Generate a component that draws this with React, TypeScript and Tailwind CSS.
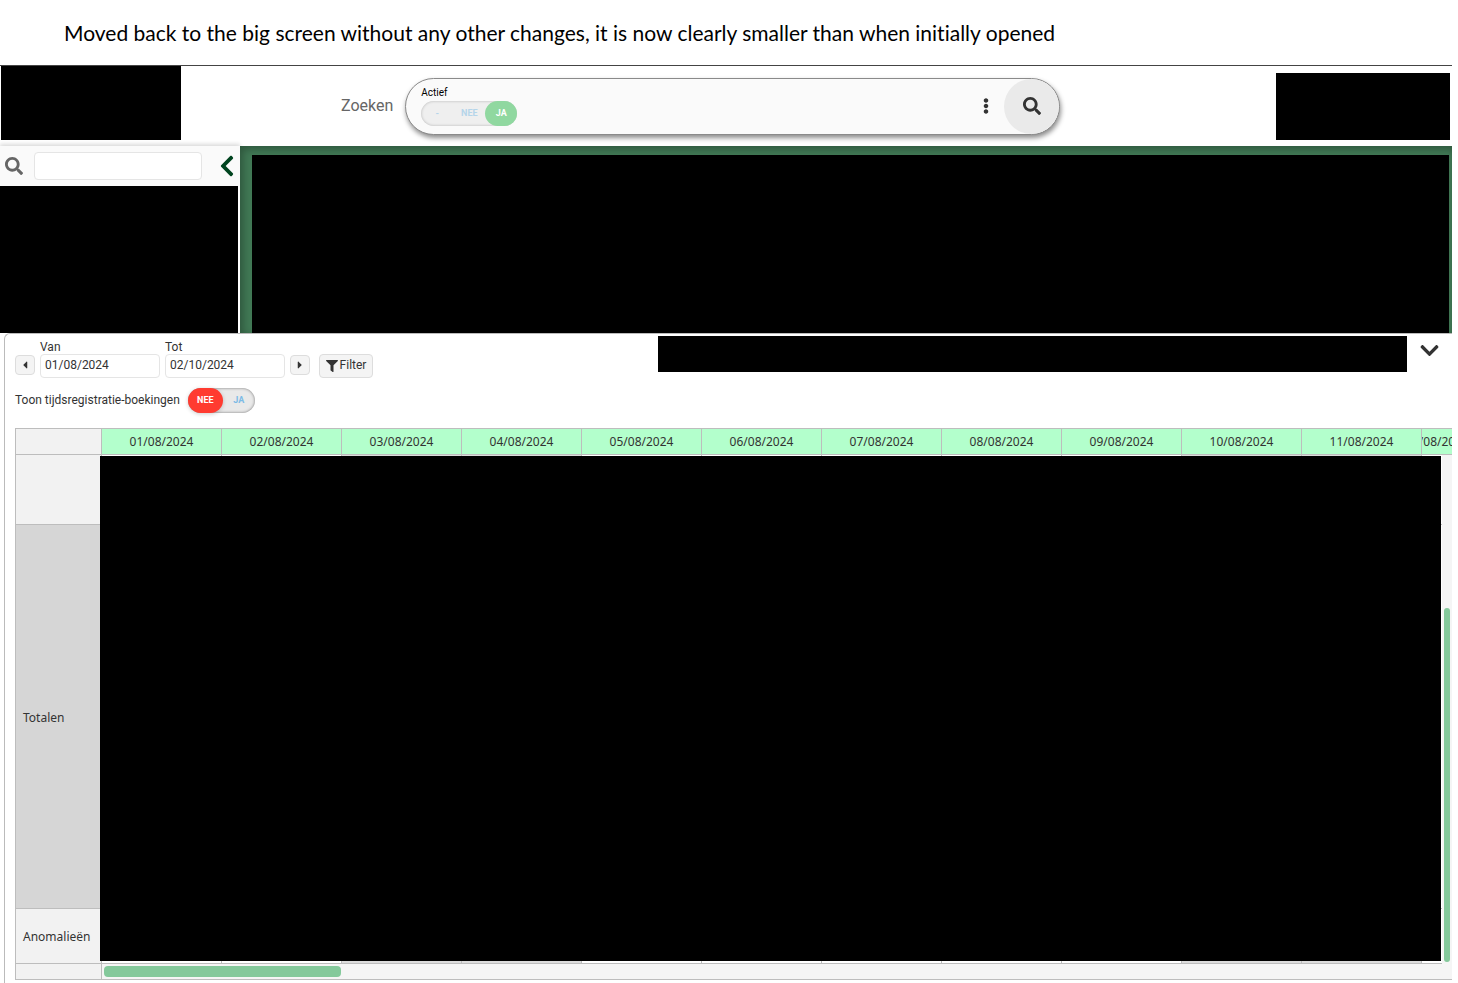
import { FaChevronDown, FaChevronLeft, FaEllipsisV, FaCaretLeft, FaCaretRight, FaFilter, FaSearch } from "react-icons/fa";

const days = [
  "01/08/2024", "02/08/2024", "03/08/2024", "04/08/2024", "05/08/2024", "06/08/2024",
  "07/08/2024", "08/08/2024", "09/08/2024", "10/08/2024", "11/08/2024", "12/08/2024",
];
const weekend = new Set(["03/08/2024", "04/08/2024", "10/08/2024", "11/08/2024"]);

const rows = [
  { label: "", height: "h-[70px]", shade: "bg-[#f2f2f2]" },
  { label: "Totalen", height: "h-[384px]", shade: "bg-[#d6d6d6]" },
  { label: "Anomalieën", height: "h-[55px]", shade: "bg-[#f2f2f2]" },
];

function Banner() {
  return (
    <h1 className="flex h-[65px] items-center pl-16 font-['Lato',sans-serif] text-[21px] text-black [font-variant-ligatures:none]">
      Moved back to the big screen without any other changes, it is now clearly smaller than when initially opened
    </h1>
  );
}

function TopBar() {
  return (
    <header className="flex h-[81px] border-t border-[#444]">
      <div className="ml-px h-[74px] w-[180px] shrink-0 bg-black" />
      <form className="ml-40 flex flex-1 items-start pt-3" onSubmit={(e) => e.preventDefault()}>
        <span className="mr-3 pt-4 text-[16px] leading-6 text-[#666]">Zoeken</span>
        <div className="flex h-[57px] flex-1 overflow-hidden rounded-full border border-[#8a8a8a] bg-[#fafafa] shadow-[1px_3px_5px_rgba(0,0,0,0.45)]">
          <div role="group" aria-labelledby="actief" className="ml-[15px] flex flex-1 flex-col gap-0.5 pt-2">
            <span id="actief" className="text-[10px] leading-3 text-black">Actief</span>
            <div className="flex h-[25px] w-24 rounded-full bg-[#efefef] text-[9px] font-bold shadow-[inset_0_0_3px_rgba(0,0,0,0.25)]">
              <button type="button" className="w-8 text-[#b5d5ea]">-</button>
              <button type="button" className="w-8 text-[#b5d5ea]">NEE</button>
              <button type="button" className="w-8 rounded-full bg-[#90d8a0] text-white">JA</button>
            </div>
          </div>
          <button type="button" aria-label="Meer" className="w-9 pb-0.5 text-[#333]">
            <FaEllipsisV className="mx-auto size-4" />
          </button>
          <button type="submit" aria-label="Zoeken" className="w-[55px] rounded-full bg-[#eaeaea] pb-0.5 text-[#333]">
            <FaSearch className="mx-auto size-[18px]" />
          </button>
        </div>
      </form>
      <div className="mt-[7px] mr-0.5 ml-[216px] h-[67px] w-[174px] shrink-0 bg-black" />
    </header>
  );
}

function Sidebar() {
  return (
    <aside className="flex w-60 shrink-0 flex-col">
      <div className="flex h-10 items-center bg-[#fafafa] pr-[5px] pl-[5px] shadow-[0_-2px_4px_rgba(0,0,0,0.15)]">
        <FaSearch className="size-[18px] text-[#666]" />
        <input aria-label="Zoek in menu" className="ml-[11px] h-7 min-w-0 flex-1 rounded-sm border border-[#e5e5e5] bg-white px-2 text-xs" />
        <button type="button" aria-label="Menu inklappen" className="ml-[17px] text-[#00441f]">
          <FaChevronLeft className="h-6 w-4" />
        </button>
      </div>
      <div className="mr-0.5 flex-1 bg-black" />
    </aside>
  );
}

function DateField({ id, label, value }: { id: string; label: string; value: string }) {
  return (
    <div className="flex w-[120px] flex-col">
      <label htmlFor={id} className="text-xs leading-[14px]">{label}</label>
      <input id={id} defaultValue={value} className="h-6 w-full rounded-sm border border-[#e5e5e5] bg-white px-1 pb-0.5 text-xs" />
    </div>
  );
}

function Filters() {
  const step = "mb-[3px] flex h-5 w-5 items-center justify-center rounded-sm border border-[#ddd] bg-[#f4f4f4]";
  return (
    <div className="flex items-start">
      <div className="flex items-end gap-[5px] pt-1.5">
        <button type="button" aria-label="Vorige periode" className={step}><FaCaretLeft className="size-3" /></button>
        <DateField id="van" label="Van" value="01/08/2024" />
        <DateField id="tot" label="Tot" value="02/10/2024" />
        <button type="button" aria-label="Volgende periode" className={step}><FaCaretRight className="size-3" /></button>
        <button type="button" className="ml-1 flex h-6 w-[54px] items-center justify-center gap-0.5 rounded-sm border border-[#ddd] bg-[#f4f4f4] pb-0.5 text-xs">
          <FaFilter className="mt-0.5 size-3" />Filter
        </button>
      </div>
      <div className="mt-0.5 ml-auto h-9 w-[749px] bg-black" />
      <button type="button" aria-label="Inklappen" className="mx-3 mt-1.5 text-[#333]">
        <FaChevronDown className="size-[21px]" />
      </button>
    </div>
  );
}

function BookingToggle() {
  return (
    <div className="mt-2.5 flex h-6 items-center gap-2 text-xs">
      <span id="boekingen">Toon tijdsregistratie-boekingen</span>
      <div role="group" aria-labelledby="boekingen" className="flex h-[25px] w-[67px] rounded-full bg-[#e9e9e9] text-[9px] font-bold shadow-[inset_0_0_3px_rgba(0,0,0,0.5)]">
        <button type="button" className="w-[35px] rounded-full bg-[#ff3b30] text-white shadow-[0_1px_4px_rgba(0,0,0,0.2)]">NEE</button>
        <button type="button" className="w-8 text-[#7dbbe6]">JA</button>
      </div>
    </div>
  );
}

function Planning() {
  return (
    <div className="relative mt-4 font-['Noto_Sans',sans-serif] text-xs">
      <table className="w-full table-fixed border-separate border-spacing-0 border-t border-l border-[#bdbdbd]">
        <colgroup>
          <col className="w-[85px]" />
          {days.slice(0, -1).map((d) => <col key={d} className="w-[120px]" />)}
          <col />
        </colgroup>
        <thead>
          <tr className="h-[26px]">
            <th className="border-b border-[#bdbdbd] bg-[#f2f2f2] p-0" />
            {days.map((d) => (
              <th key={d} className="overflow-hidden border-b border-l border-[#bdbdbd] bg-[#b3ffcc] p-0 font-normal">
                <div className="flex justify-center leading-4">{d}</div>
              </th>
            ))}
          </tr>
        </thead>
        <tbody>
          {rows.map((r, i) => (
            <tr key={i} className={r.height}>
              <th scope="row" className={`border-b border-[#bdbdbd] p-0 pt-0.5 pl-[7px] text-left font-normal ${r.shade}`}>{r.label}</th>
              {days.map((d) => (
                <td key={d} className={`border-b border-l border-[#bdbdbd] p-0 ${weekend.has(d) ? "bg-[#dcdcdc]" : "bg-white"}`} />
              ))}
            </tr>
          ))}
        </tbody>
        <tfoot>
          <tr className="h-4">
            <td className="border-b border-[#bdbdbd] bg-[#f2f2f2] p-0" />
            <td colSpan={12} className="border-b border-l border-[#bdbdbd] bg-[#f5f5f5] p-0 pl-0.5">
              <div className="h-[11px] w-[237px] rounded bg-[#84c99b]" />
            </td>
          </tr>
        </tfoot>
      </table>
      <div className="absolute top-7 right-[11px] bottom-[19px] left-[85px] bg-black" />
      <div className="absolute top-[27px] right-0 bottom-4 flex w-2.5 items-end bg-[#f5f5f5] pb-0.5 pl-0.5">
        <div className="h-[354px] w-1.5 rounded-full bg-[#84c99b]" />
      </div>
    </div>
  );
}

export default function App() {
  return (
    <div className="bg-white pr-1.5 font-['Roboto',sans-serif] text-[#333]">
      <Banner />
      <TopBar />
      <div className="flex h-[187px]">
        <Sidebar />
        <main className="flex-1 bg-[#417955] pt-[9px] pr-[3px] pl-3 shadow-[inset_3px_3px_8px_rgba(0,0,0,0.3)]">
          <div className="h-full bg-black" />
        </main>
      </div>
      <section className="ml-1 rounded-tl-md border-t border-l border-[#bbb] pb-[3px] pl-2.5">
        <Filters />
        <BookingToggle />
        <Planning />
      </section>
    </div>
  );
}
